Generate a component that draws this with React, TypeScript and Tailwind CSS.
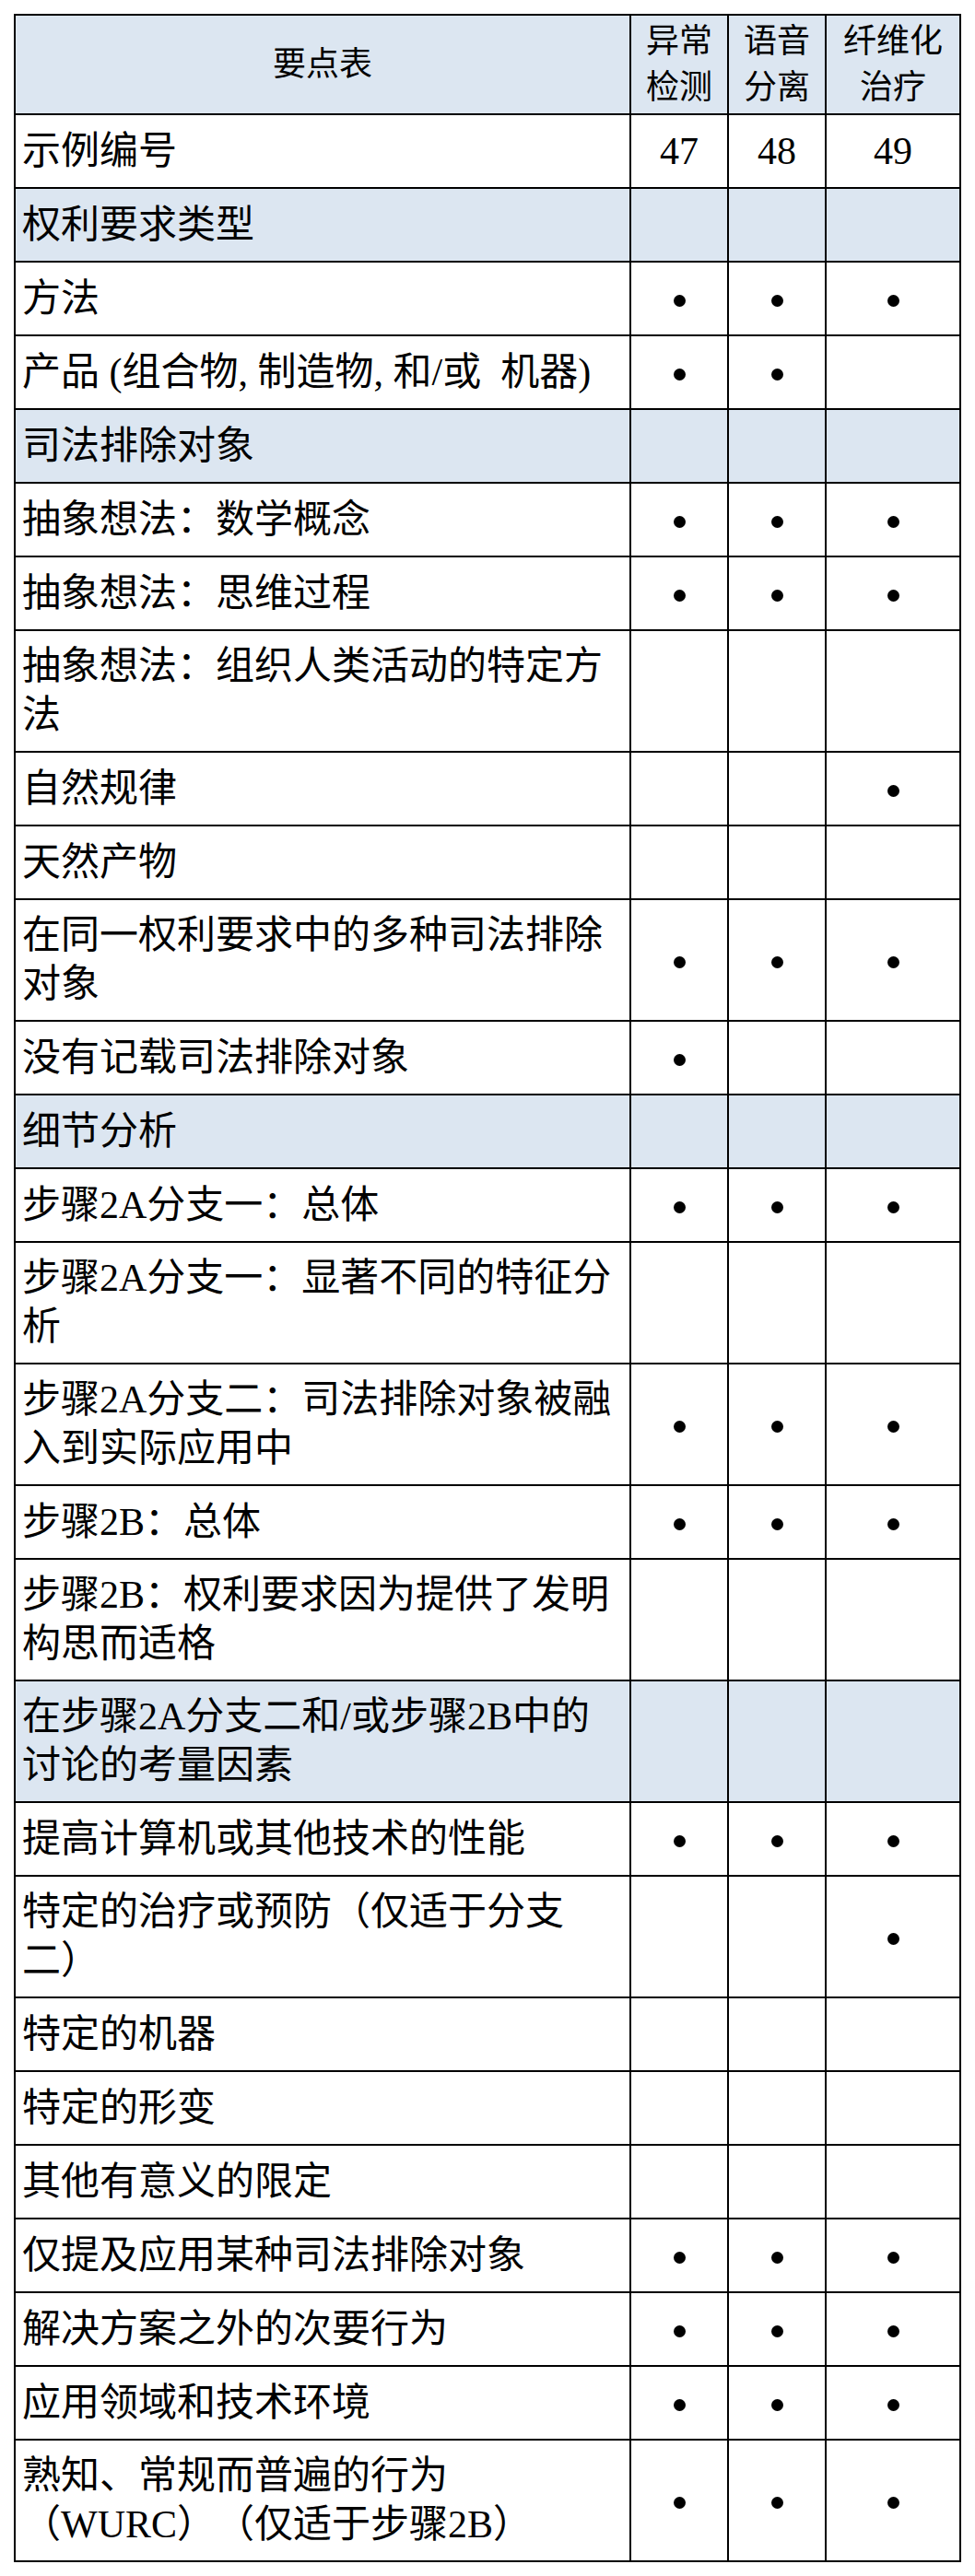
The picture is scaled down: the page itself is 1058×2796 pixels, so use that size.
import React from "react";

type Row = {
  t: string;
  blue?: boolean;
  two?: boolean;
  m?: number[];
  nums?: string[];
};

const rows: Row[] = [
  { t: "示例编号", nums: ["47", "48", "49"] },
  { t: "权利要求类型", blue: true },
  { t: "方法", m: [1, 1, 1] },
  { t: "产品 (组合物, 制造物, 和/或\u00a0 机器)", m: [1, 1, 0] },
  { t: "司法排除对象", blue: true },
  { t: "抽象想法：数学概念", m: [1, 1, 1] },
  { t: "抽象想法：思维过程", m: [1, 1, 1] },
  { t: "抽象想法：组织人类活动的特定方法", two: true },
  { t: "自然规律", m: [0, 0, 1] },
  { t: "天然产物" },
  { t: "在同一权利要求中的多种司法排除对象", two: true, m: [1, 1, 1] },
  { t: "没有记载司法排除对象", m: [1, 0, 0] },
  { t: "细节分析", blue: true },
  { t: "步骤2A分支一：总体", m: [1, 1, 1] },
  { t: "步骤2A分支一：显著不同的特征分析", two: true },
  { t: "步骤2A分支二：司法排除对象被融入到实际应用中", two: true, m: [1, 1, 1] },
  { t: "步骤2B：总体", m: [1, 1, 1] },
  { t: "步骤2B：权利要求因为提供了发明构思而适格", two: true },
  { t: "在步骤2A分支二和/或步骤2B中的讨论的考量因素", two: true, blue: true },
  { t: "提高计算机或其他技术的性能", m: [1, 1, 1] },
  { t: "特定的治疗或预防（仅适于分支二）", two: true, m: [0, 0, 1] },
  { t: "特定的机器" },
  { t: "特定的形变" },
  { t: "其他有意义的限定" },
  { t: "仅提及应用某种司法排除对象", m: [1, 1, 1] },
  { t: "解决方案之外的次要行为", m: [1, 1, 1] },
  { t: "应用领域和技术环境", m: [1, 1, 1] },
  { t: "熟知、常规而普遍的行为（WURC）（仅适于步骤2B）", two: true, m: [1, 1, 1] },
];

const cell = "border-r-2 border-b-2 border-black";

function Dot() {
  return <div className="w-[13px] h-[13px] rounded-full bg-black" />;
}

export default function App() {
  return (
    <div className="w-[1058px] h-[2796px] bg-white pl-[15px] pt-[15px] text-black font-['Liberation_Serif','Noto_Sans_CJK_SC',serif] [text-spacing-trim:space-all]">
      <div className="w-[1028px] border-l-2 border-t-2 border-black">
        <div className="grid grid-cols-[668px_106px_106px_146px] h-[108px] bg-[#dce6f1] text-[36px] leading-[50px]">
          <div className={`${cell} flex items-center justify-center`}>要点表</div>
          <div className={`${cell} flex flex-col items-center justify-center text-center`}>
            <span>异常</span>
            <span>检测</span>
          </div>
          <div className={`${cell} flex flex-col items-center justify-center text-center`}>
            <span>语音</span>
            <span>分离</span>
          </div>
          <div className={`${cell} flex flex-col items-center justify-center text-center`}>
            <span>纤维化</span>
            <span>治疗</span>
          </div>
        </div>
        {rows.map((r, i) => (
          <div
            key={i}
            className={`grid grid-cols-[668px_106px_106px_146px] text-[42px] leading-[53px] ${
              r.two ? "h-[132px]" : "h-[80px]"
            } ${r.blue ? "bg-[#dce6f1]" : "bg-white"}`}
          >
            <div className={`${cell} flex items-center pl-[7px] pr-[10px]`}>
              <span>{r.t}</span>
            </div>
            {[0, 1, 2].map((c) => (
              <div key={c} className={`${cell} flex items-center justify-center`}>
                {r.nums ? (
                  <span>{r.nums[c]}</span>
                ) : r.m && r.m[c] ? (
                  <div className="pt-[5px]">
                    <Dot />
                  </div>
                ) : null}
              </div>
            ))}
          </div>
        ))}
      </div>
    </div>
  );
}
